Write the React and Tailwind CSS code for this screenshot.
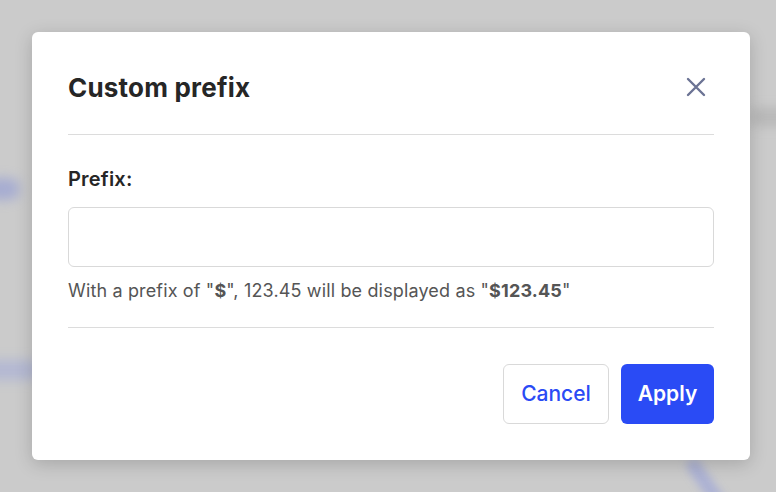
export default function App() {
  return (
    <div
      className="relative flex h-[492px] w-[776px] overflow-hidden bg-[#cbcbcb] pl-[32px] pt-[32px]"
      style={{ fontFamily: 'Inter, "Noto Sans", sans-serif' }}
    >
      {/* blurred page behind the overlay */}
      <div className="absolute left-[-20px] top-[178px] h-[22px] w-[40px] rounded-full bg-[#8f99d6] opacity-60 blur-[6px]" />
      <div className="absolute left-[-20px] top-[360px] h-[20px] w-[60px] rounded-full bg-[#a4acd8] opacity-60 blur-[6px]" />
      <div className="absolute left-[700px] top-[455px] h-[60px] w-[14px] rotate-[-35deg] rounded-full bg-[#9ea6d8] opacity-70 blur-[4px]" />
      <div className="absolute left-[750px] top-[108px] h-[18px] w-[40px] bg-[#b0b0b0] opacity-70 blur-[6px]" />

      <div className="relative flex h-[428px] w-[718px] flex-col rounded-[6px] bg-white px-[36px] shadow-[0_4px_18px_rgba(0,0,0,0.18)]">
        <div className="flex h-[103px] items-center justify-between border-b border-[#dcdcdc] pt-[8px]">
          <h2 className="text-[26px] font-bold tracking-[0.2px] text-[#262626]">Custom prefix</h2>
          <button className="mr-[8px] text-[#6b7394]">
            <svg width="20" height="20" viewBox="0 0 20 20" fill="none" stroke="currentColor" strokeWidth="2.4" strokeLinecap="round">
              <path d="M2 2L18 18M18 2L2 18" />
            </svg>
          </button>
        </div>

        <div className="flex flex-col border-b border-[#dcdcdc] pb-[22px] pt-[30px]">
          <label className="text-[20px] leading-[28px] font-semibold tracking-[0.2px] text-[#262626]">Prefix:</label>
          <input className="mt-[14px] h-[60px] w-full rounded-[6px] border border-[#d9d9d9] px-[12px] text-[16px] outline-none" />
          <p className="mt-[10px] text-[18px] leading-[28px] tracking-[0.15px] text-[#555555]">
            With a prefix of "<span className="font-bold">$</span>", 123.45 will be displayed as "<span className="font-bold">$123.45</span>"
          </p>
        </div>

        <div className="flex justify-end gap-[12px] pt-[36px]">
          <button className="h-[60px] w-[106px] rounded-[6px] border border-[#d9d9d9] bg-white text-[21px] font-medium text-[#2a4bf5]">
            Cancel
          </button>
          <button className="h-[60px] w-[93px] rounded-[6px] bg-[#2a4bf5] text-[21px] font-semibold text-white">
            Apply
          </button>
        </div>
      </div>
    </div>
  );
}
